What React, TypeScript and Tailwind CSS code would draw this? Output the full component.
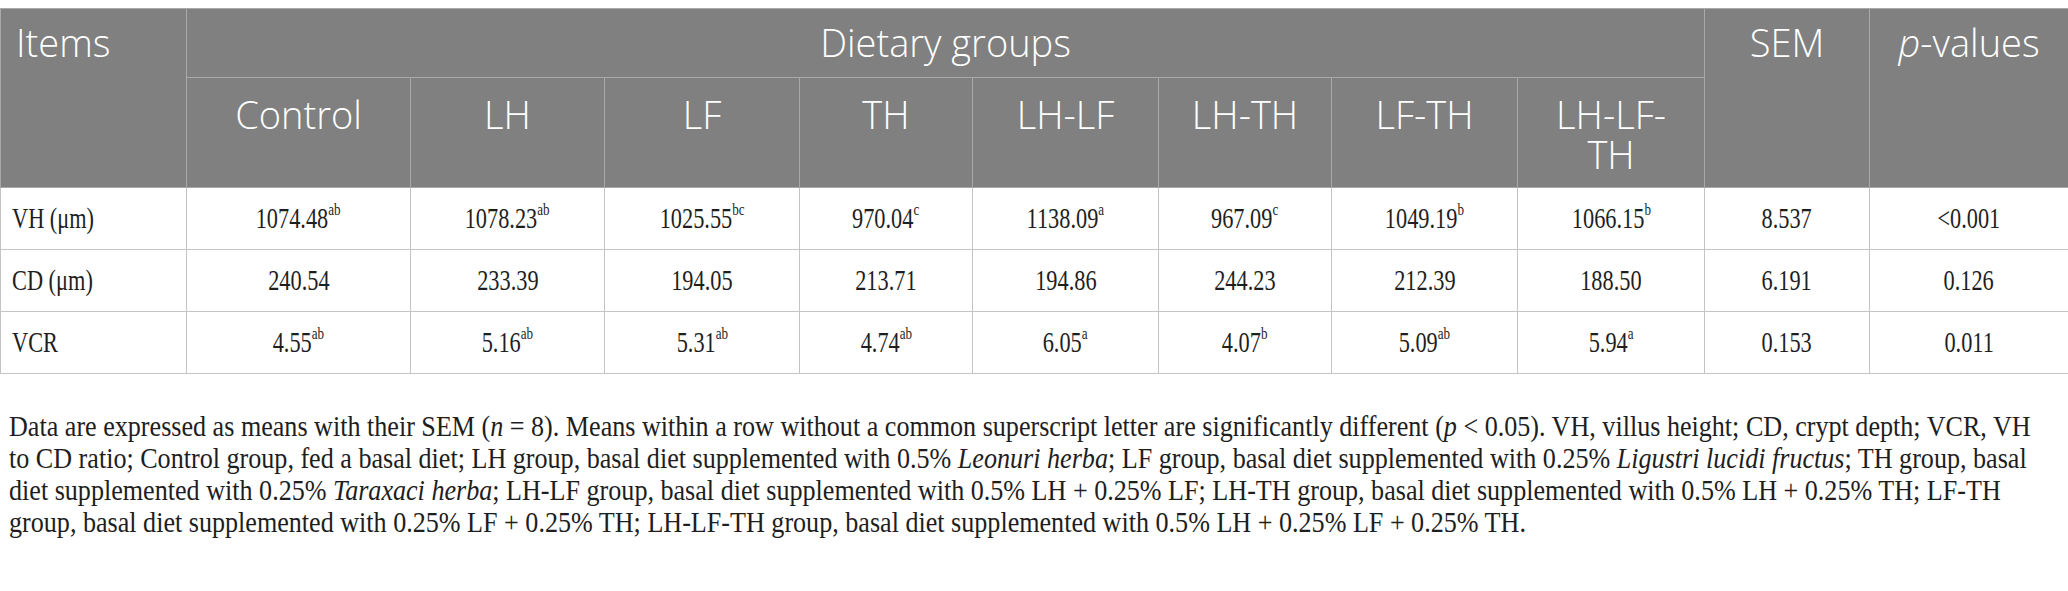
const headCell = "border border-[#a9a9a9] align-top px-3 pt-[16px] text-white font-light"
const bodyCell = "border border-[#c4c4c4] text-center"

type Row = { label: string; values: [string, string?][]; sem: string; p: string }

const rows: Row[] = [
    {
        label: "VH (μm)",
        values: [["1074.48", "ab"], ["1078.23", "ab"], ["1025.55", "bc"], ["970.04", "c"], ["1138.09", "a"], ["967.09", "c"], ["1049.19", "b"], ["1066.15", "b"]],
        sem: "8.537",
        p: "<0.001",
    },
    {
        label: "CD (μm)",
        values: [["240.54"], ["233.39"], ["194.05"], ["213.71"], ["194.86"], ["244.23"], ["212.39"], ["188.50"]],
        sem: "6.191",
        p: "0.126",
    },
    {
        label: "VCR",
        values: [["4.55", "ab"], ["5.16", "ab"], ["5.31", "ab"], ["4.74", "ab"], ["6.05", "a"], ["4.07", "b"], ["5.09", "ab"], ["5.94", "a"]],
        sem: "0.153",
        p: "0.011",
    },
]

const groups = ["Control", "LH", "LF", "TH", "LH-LF", "LH-TH", "LF-TH"]

const widths = [186, 224, 194, 195, 173, 186, 173, 186, 187, 165, 199]

// times-like figures in the source are set a bit condensed
const Narrow = ({ children, left }: { children: React.ReactNode; left?: boolean }) => (
    <span className={`inline-block whitespace-nowrap scale-x-[0.77] ${left ? "origin-left" : "origin-center"}`}>{children}</span>
)

const App = () => {
    return (
        <div className="w-[2068px] overflow-hidden bg-white pt-[8px] pb-[40px]">
            <table className="w-[2068px] table-fixed border-collapse">
                <colgroup>
                    {widths.map((w, i) => (
                        <col key={i} style={{ width: w }} />
                    ))}
                </colgroup>
                <thead className="bg-[#808080] font-['Open_Sans',sans-serif] text-[38px] leading-[40px]">
                    <tr className="h-[69px]">
                        <th rowSpan={2} className={`${headCell} text-left !pl-[15px] !pt-[13px]`}>Items</th>
                        <th colSpan={8} className={`${headCell} text-center !pt-[13px]`}>Dietary groups</th>
                        <th rowSpan={2} className={`${headCell} text-center !pt-[13px]`}>SEM</th>
                        <th rowSpan={2} className={`${headCell} text-center !pt-[13px]`}>
                            <i>p</i>-values
                        </th>
                    </tr>
                    <tr className="h-[110px]">
                        {groups.map((g) => (
                            <th key={g} className={`${headCell} text-center`}>{g}</th>
                        ))}
                        <th className={`${headCell} text-center !px-[36px]`}>LH-LF-TH</th>
                    </tr>
                </thead>
                <tbody className="font-['Liberation_Serif',serif] text-[29px] text-[#1e1e1e]">
                    {rows.map((r) => (
                        <tr key={r.label} className="h-[62px]">
                            <td className="border border-[#c4c4c4] pl-[11px] text-left">
                                <Narrow left>{r.label}</Narrow>
                            </td>
                            {r.values.map(([v, s], i) => (
                                <td key={i} className={bodyCell}>
                                    <Narrow>
                                        {v}
                                        {s && <sup className="text-[17px] top-[-0.75em]">{s}</sup>}
                                    </Narrow>
                                </td>
                            ))}
                            <td className={bodyCell}>
                                <Narrow>{r.sem}</Narrow>
                            </td>
                            <td className={bodyCell}>
                                <Narrow>{r.p}</Narrow>
                            </td>
                        </tr>
                    ))}
                </tbody>
            </table>

            <p className="mt-[36px] pl-[10px] origin-left scale-x-[0.9] font-['Liberation_Serif',serif] text-[29px] leading-[32px] text-[#1e1e1e] whitespace-nowrap">
                Data are expressed as means with their SEM (<i>n</i> = 8). Means within a row without a common superscript letter are
                significantly different (<i>p</i> &lt; 0.05). VH, villus height; CD, crypt depth; VCR, VH
                <br />
                to CD ratio; Control group, fed a basal diet; LH group, basal diet supplemented with 0.5% <i>Leonuri herba</i>; LF group,
                basal diet supplemented with 0.25% <i>Ligustri lucidi fructus</i>; TH group, basal
                <br />
                diet supplemented with 0.25% <i>Taraxaci herba</i>; LH-LF group, basal diet supplemented with 0.5% LH + 0.25% LF; LH-TH
                group, basal diet supplemented with 0.5% LH + 0.25% TH; LF-TH
                <br />
                group, basal diet supplemented with 0.25% LF + 0.25% TH; LH-LF-TH group, basal diet supplemented with 0.5% LH + 0.25% LF +
                0.25% TH.
            </p>
        </div>
    )
}

export default App
